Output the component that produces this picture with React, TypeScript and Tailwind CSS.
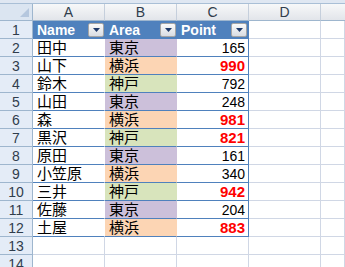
import React from "react";

type Row = { name: string; area: string; point: number };

const rows: Row[] = [
  { name: "田中", area: "東京", point: 165 },
  { name: "山下", area: "横浜", point: 990 },
  { name: "鈴木", area: "神戸", point: 792 },
  { name: "山田", area: "東京", point: 248 },
  { name: "森", area: "横浜", point: 981 },
  { name: "黒沢", area: "神戸", point: 821 },
  { name: "原田", area: "東京", point: 161 },
  { name: "小笠原", area: "横浜", point: 340 },
  { name: "三井", area: "神戸", point: 942 },
  { name: "佐藤", area: "東京", point: 204 },
  { name: "土屋", area: "横浜", point: 883 },
];

const areaBg: Record<string, string> = {
  東京: "bg-[#ccc0da] border-r-[#ccc0da]",
  横浜: "bg-[#fcd5b4] border-r-[#fcd5b4]",
  神戸: "bg-[#d8e4bc] border-r-[#d8e4bc]",
};

const jp = "font-['Liberation_Sans','Noto_Sans_CJK_JP',sans-serif]";

const RowHead = ({ n }: { n: number }) => (
  <div className="h-[18px] flex items-center justify-center bg-[#e4ecf7] border-r border-b border-[#9eb6ce] text-[14px] text-[#303d4c] leading-none">
    {n}
  </div>
);

const Blank = ({ blue }: { blue?: boolean }) => (
  <div
    className={
      "h-[18px] border-r border-b border-[#d0d7e5] " +
      (blue ? "border-b-[#4f81bd]" : "")
    }
  />
);

const Dropdown = () => (
  <div className="w-[16px] h-[14px] mr-[1px] flex items-center justify-center rounded-[2px] border border-[#a5a5a5] bg-gradient-to-b from-[#fafafa] to-[#d9dde3]">
    <svg width="7" height="4" viewBox="0 0 7 4">
      <path d="M0 0h7L3.5 4z" fill="#1f3a6a" />
    </svg>
  </div>
);

const ColHead = ({ label, last }: { label: string; last?: boolean }) => (
  <div
    className={
      "h-[17px] flex items-center justify-center border-b border-[#9eb6ce] bg-gradient-to-b from-[#f7f8f9] to-[#e2e5ea] text-[14px] text-[#303d4c] leading-none " +
      (last ? "" : "border-r border-r-[#c5cfdc]")
    }
  >
    {label}
  </div>
);

export default function App() {
  return (
    <div className={"w-[345px] h-[267px] overflow-hidden bg-white " + jp}>
      <div className="h-[4px] bg-[#dfe7f2] border-b border-[#a9bfd6]" />
      <div className="grid grid-cols-[33px_72px_72px_72px_72px_1fr]">
        <div className="h-[17px] relative bg-[#dbe5f1] border-r border-b border-[#9eb6ce]">
          <svg
            className="absolute right-[3px] bottom-[3px]"
            width="9"
            height="9"
            viewBox="0 0 9 9"
          >
            <path d="M9 0v9H0z" fill="#b5c7de" />
          </svg>
        </div>
        <ColHead label="A" />
        <ColHead label="B" />
        <ColHead label="C" />
        <ColHead label="D" />
        <ColHead label="" last />

        <RowHead n={1} />
        {["Name", "Area", "Point"].map((h, i) => (
          <div
            key={h}
            className={
              "h-[18px] flex items-center justify-between pl-[4px] bg-[#4f81bd] border-b border-[#4f81bd] text-white font-bold text-[14px] leading-none " +
              (i === 2 ? "border-r border-r-[#4f81bd]" : "")
            }
          >
            <span>{h}</span>
            <Dropdown />
          </div>
        ))}
        <Blank />
        <Blank />

        {rows.map((r, i) => (
          <React.Fragment key={r.name}>
            <RowHead n={i + 2} />
            <div className="h-[18px] flex items-center pl-[4px] bg-white border-r border-r-white border-b border-b-[#4f81bd] text-[15px] text-black leading-none">
              {r.name}
            </div>
            <div
              className={
                "h-[18px] flex items-center pl-[4px] border-r border-b border-b-[#4f81bd] text-[15px] text-black leading-none " +
                areaBg[r.area]
              }
            >
              {r.area}
            </div>
            <div
              className={
                "h-[18px] flex items-center justify-end pr-[3px] bg-white border-r border-b border-[#4f81bd] leading-none " +
                (r.point > 800
                  ? "text-[#ff0000] font-bold text-[15px]"
                  : "text-black text-[14px]")
              }
            >
              {r.point}
            </div>
            <Blank />
            <Blank />
          </React.Fragment>
        ))}

        {[13, 14].map((n) => (
          <React.Fragment key={n}>
            <RowHead n={n} />
            <Blank />
            <Blank />
            <Blank />
            <Blank />
            <Blank />
          </React.Fragment>
        ))}
      </div>
    </div>
  );
}
